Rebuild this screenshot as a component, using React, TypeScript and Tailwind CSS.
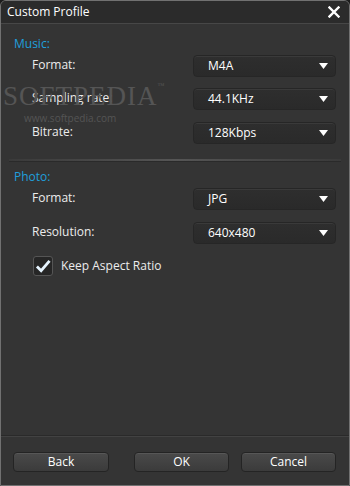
import React from "react";

const font = { fontFamily: '"Open Sans", "Noto Sans", "Liberation Sans", sans-serif' };

function Arrow() {
  return (
    <svg width="9" height="6" viewBox="0 0 9 6" className="block">
      <polygon points="0,0 9,0 4.5,6" fill="#ffffff" />
    </svg>
  );
}

function Dropdown({ value }: { value: string }) {
  return (
    <div className="flex h-[22px] w-[143px] items-center justify-between rounded-[4px] border border-[#262626] bg-gradient-to-b from-[#2e2e2e] to-[#2a2a2a] pl-[14px] pr-[7px] shadow-[inset_0_1px_0_#3a3a3a]">
      <span className="text-[12px] leading-none text-white">{value}</span>
      <Arrow />
    </div>
  );
}

function Row({ label, value, className }: { label: string; value: string; className?: string }) {
  return (
    <div className={"flex items-center pl-[31px] pr-[13px] " + (className ?? "")}>
      <span className="-mt-[2px] flex-1 text-[12px] leading-none text-[#ececec]">{label}</span>
      <Dropdown value={value} />
    </div>
  );
}

function Button({ label, w }: { label: string; w: string }) {
  return (
    <div
      className={
        "flex h-[20px] items-center justify-center rounded-[4px] border border-[#242424] bg-gradient-to-b from-[#4a4a4a] to-[#3b3b3b] text-[12px] leading-none text-white shadow-[inset_0_1px_0_#575757] " +
        w
      }
    >
      {label}
    </div>
  );
}

export default function App() {
  return (
    <div style={font} className="h-[486px] w-[350px] bg-[#1c1c1c] p-0">
      <div className="relative flex h-[486px] w-[350px] flex-col overflow-hidden rounded-t-[6px] border border-[#717171] bg-[#343434]">
        {/* title bar */}
        <div className="flex h-[23px] shrink-0 items-center justify-between border-b border-[#474747] bg-[#2b2b2b] pl-[6px] pr-[9px]">
          <span className="text-[12px] leading-none text-white">Custom Profile</span>
          <svg width="12" height="12" viewBox="0 0 12 12">
            <path d="M1.5 1.5 L10.5 10.5 M10.5 1.5 L1.5 10.5" stroke="#ffffff" strokeWidth="2.4" strokeLinecap="square" />
          </svg>
        </div>

        {/* music */}
        <div className="mt-[13px] pl-[13px] text-[12px] leading-[14px] text-[#1f9fdc]">Music:</div>
        <Row className="mt-[4px]" label="Format:" value="M4A" />
        <Row className="mt-[11px]" label="Sampling rate:" value="44.1KHz" />
        <Row className="mt-[12px]" label="Bitrate:" value="128Kbps" />

        <div className="mx-[8px] mt-[15px] h-[2px] bg-gradient-to-r from-[#3a3a3a] via-[#555555] to-[#3a3a3a] shadow-[0_1px_0_#2a2a2a]" />

        {/* photo */}
        <div className="mt-[9px] pl-[13px] text-[12px] leading-[14px] text-[#1f9fdc]">Photo:</div>
        <Row className="mt-[4px]" label="Format:" value="JPG" />
        <Row className="mt-[12px]" label="Resolution:" value="640x480" />

        <div className="mt-[12px] flex items-center pl-[32px]">
          <div className="flex h-[20px] w-[20px] items-center justify-center rounded-[3px] border border-[#555555] bg-[#262626]">
            <svg width="16" height="14" viewBox="0 0 17 15">
              <path d="M2 8 L6.5 12.5 L15.5 2" fill="none" stroke="#e6f4ff" strokeWidth="3" strokeLinejoin="miter" />
            </svg>
          </div>
          <span className="ml-[8px] text-[12px] leading-none text-[#ececec]">Keep Aspect Ratio</span>
        </div>

        <div className="flex-1" />

        <div className="h-[1px] bg-[#2a2a2a]" />
        <div className="h-[1px] bg-[#424242]" />
        <div className="flex items-center justify-between pb-[13px] pl-[12px] pr-[13px] pt-[15px]">
          <Button label="Back" w="w-[96px]" />
          <div className="flex gap-[12px]">
            <Button label="OK" w="w-[95px]" />
            <Button label="Cancel" w="w-[95px]" />
          </div>
        </div>

        {/* watermark */}
        <div className="pointer-events-none absolute left-[2px] top-[82px] text-[27px] leading-none tracking-[1px] text-[#555555]" style={{ fontFamily: '"Liberation Serif", serif' }}>
          SOFTPEDIA<span className="align-top text-[7px]">™</span>
        </div>
        <div className="pointer-events-none absolute left-[23px] top-[112px] text-[10px] leading-none text-[#555555]">
          www.softpedia.com
        </div>
      </div>
    </div>
  );
}
